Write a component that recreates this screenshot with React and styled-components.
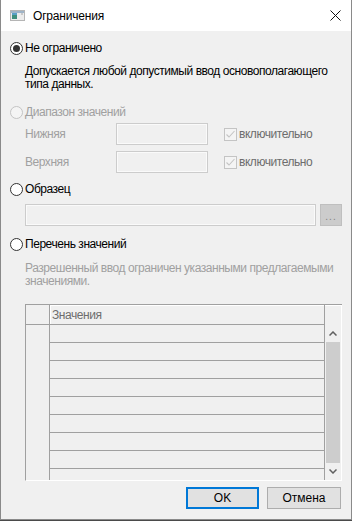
import React from 'react';
import styled, { createGlobalStyle } from 'styled-components';

const GlobalStyle = createGlobalStyle`
  html, body {
    margin: 0;
    padding: 0;
    background: #4a4a4a;
  }
  * {
    box-sizing: border-box;
  }
`;

const Window = styled.div`
  width: 352px;
  height: 520px;
  border: 1px solid #8a8a8a;
  border-top: none;
  background: #f0f0f0;
  font-family: "Liberation Sans", "Noto Sans", sans-serif;
  font-size: 12px;
  letter-spacing: -0.45px;
  color: #000;
  display: flex;
  flex-direction: column;
  overflow: hidden;
`;

const TitleBar = styled.div`
  height: 31px;
  background: #fff;
  display: flex;
  align-items: center;
  padding: 0 10px 0 9px;
  flex-shrink: 0;
`;

const TitleText = styled.span`
  margin-left: 8px;
  flex: 1;
  font-size: 12px;
  line-height: 14px;
  letter-spacing: -0.2px;
`;

const Body = styled.div`
  flex: 1;
  padding: 10px 9px 0 9px;
  display: flex;
  flex-direction: column;
`;

const RadioRow = styled.label`
  display: flex;
  align-items: center;
  height: 14px;
  margin-top: ${p => p.$top || 0}px;
  color: ${p => (p.$disabled ? '#a0a0a0' : '#000')};
  white-space: nowrap;
`;

const RadioCircle = styled.span`
  width: 13px;
  height: 13px;
  border-radius: 50%;
  border: 1px solid ${p => (p.$disabled ? '#c4c4c4' : '#333')};
  background: ${p => (p.$disabled ? '#f4f4f4' : '#fff')};
  display: flex;
  align-items: center;
  justify-content: center;
  margin-right: 2px;
  flex-shrink: 0;

  &::after {
    content: '';
    width: 7px;
    height: 7px;
    border-radius: 50%;
    background: #333;
    display: ${p => (p.$checked ? 'block' : 'none')};
  }
`;

const Desc = styled.div`
  margin: ${p => p.$top || 0}px 0 0 15px;
  color: ${p => (p.$muted ? '#a0a0a0' : '#000')};
  display: flex;
  flex-direction: column;
`;

const DescLine = styled.span`
  height: 13px;
  line-height: 13px;
  white-space: nowrap;
`;

const RangeRow = styled.div`
  display: flex;
  align-items: center;
  margin: ${p => p.$top || 0}px 0 0 15px;
  height: 22px;
`;

const RangeLabel = styled.span`
  width: 91px;
  color: #a0a0a0;
`;

const Field = styled.div`
  width: ${p => p.$w}px;
  height: 22px;
  border: 1px solid #cccccc;
  box-shadow: inset 0 0 0 1px #fafafa;
  background: #f0f0f0;
  flex-shrink: 0;
`;

const CheckBox = styled.span`
  width: 13px;
  height: 13px;
  border: 1px solid #c4c4c4;
  background: #f4f4f4;
  margin: 0 2px 0 16px;
  display: flex;
  align-items: center;
  justify-content: center;
`;

const CheckLabel = styled.span`
  color: #6d6d6d;
`;

const PatternRow = styled.div`
  display: flex;
  align-items: center;
  gap: 4px;
  margin: 8px 0 0 15px;
`;

const DotsButton = styled.div`
  width: 24px;
  height: 22px;
  background: #cccccc;
  border: 1px solid #bfbfbf;
  color: #838383;
  font-size: 10px;
  display: flex;
  align-items: flex-end;
  justify-content: center;
  padding-bottom: 3px;
  letter-spacing: 1px;
  line-height: 10px;
`;

const Table = styled.div`
  margin: 16px 0 0 15px;
  width: 317px;
  height: 177px;
  display: flex;
  border-top: 1px solid #a0a0a0;
  border-left: 1px solid #a0a0a0;
  border-bottom: 1px solid #fff;
  overflow: hidden;
`;

const RowHeadCol = styled.div`
  width: 24px;
  border-right: 1px solid #a0a0a0;
  flex-shrink: 0;
`;

const HeadCell = styled.div`
  height: 20px;
  border-bottom: 1px solid #a0a0a0;
  ${p => p.$light && 'box-shadow: inset 1px 1px 0 #fff;'}
  color: #6d6d6d;
  padding: 3px 0 0 2px;
  line-height: 14px;
`;

const DataCol = styled.div`
  flex: 1;
  border-right: 1px solid #a0a0a0;
  overflow: hidden;
`;

const DataRow = styled.div`
  height: 18px;
  border-bottom: 1px solid #a0a0a0;
`;

const ScrollCol = styled.div`
  width: 17px;
  border-right: 1px solid #fff;
  display: flex;
  flex-direction: column;
  flex-shrink: 0;
`;

const ScrollHead = styled.div`
  height: 20px;
  box-shadow: inset 0 1px 0 #fff;
`;

const ScrollArrow = styled.div`
  height: 17px;
  display: flex;
  align-items: center;
  justify-content: center;
`;

const Thumb = styled.div`
  height: 121px;
  margin: 0 1px;
  background: #cdcdcd;
`;

const Footer = styled.div`
  display: flex;
  justify-content: flex-end;
  gap: 8px;
  margin-top: 6px;
  padding-right: 1px;
`;

const Button = styled.div`
  width: ${p => p.$w}px;
  height: 22px;
  background: #e1e1e1;
  border: ${p => (p.$primary ? '2px solid #0078d7' : '1px solid #adadad')};
  display: flex;
  align-items: center;
  justify-content: center;
  line-height: 14px;
  letter-spacing: 0;
`;

const Radio = ({ label, checked, disabled, top }) => (
  <RadioRow $disabled={disabled} $top={top}>
    <RadioCircle $checked={checked} $disabled={disabled} />
    {label}
  </RadioRow>
);

const Check = () => (
  <CheckBox>
    <svg width="11" height="11" viewBox="0 0 11 11">
      <path d="M1.5 5.5 L4 8 L9.5 2" fill="none" stroke="#c4c4c4" strokeWidth="1.1" />
    </svg>
  </CheckBox>
);

const AppIcon = () => (
  <svg width="15" height="11" viewBox="0 0 15 11">
    <rect x="0.5" y="0.5" width="14" height="10" fill="#ececec" stroke="#b5b5b5" />
    <rect x="1" y="1" width="13" height="2" fill="#9fb4c8" />
    <rect x="2" y="3" width="5" height="6" fill="#3f8f7d" />
    <rect x="2" y="3" width="5" height="2" fill="#5aa0c8" />
    <rect x="11" y="3" width="2" height="2" fill="#c8c8c8" />
  </svg>
);

const CloseIcon = () => (
  <svg width="11" height="11" viewBox="0 0 11 11">
    <path d="M0.5 0.5 L10.5 10.5 M10.5 0.5 L0.5 10.5" stroke="#111" strokeWidth="1" />
  </svg>
);

const Chevron = ({ down }) => (
  <svg width="8" height="5" viewBox="0 0 8 5" style={down ? { transform: 'rotate(180deg)' } : undefined}>
    <path d="M0.5 4.5 L4 1 L7.5 4.5" fill="none" stroke="#606060" strokeWidth="1.5" />
  </svg>
);

const rows = Array.from({ length: 9 });

const App = () => {
  return (
    <Window>
      <GlobalStyle />
      <TitleBar>
        <AppIcon />
        <TitleText>Ограничения</TitleText>
        <CloseIcon />
      </TitleBar>
      <Body>
        <Radio label="Не ограничено" checked />
        <Desc $top={10}>
          <DescLine>Допускается любой допустимый ввод основополагающего</DescLine>
          <DescLine>типа данных.</DescLine>
        </Desc>

        <Radio label="Диапазон значений" disabled top={14} />
        <RangeRow $top={4}>
          <RangeLabel>Нижняя</RangeLabel>
          <Field $w={92} />
          <Check />
          <CheckLabel>включительно</CheckLabel>
        </RangeRow>
        <RangeRow $top={6}>
          <RangeLabel>Верхняя</RangeLabel>
          <Field $w={92} />
          <Check />
          <CheckLabel>включительно</CheckLabel>
        </RangeRow>

        <Radio label="Образец" top={9} />
        <PatternRow>
          <Field $w={291} />
          <DotsButton>...</DotsButton>
        </PatternRow>

        <Radio label="Перечень значений" top={11} />
        <Desc $top={11} $muted>
          <DescLine>Разрешенный ввод ограничен указанными предлагаемыми</DescLine>
          <DescLine>значениями.</DescLine>
        </Desc>

        <Table>
          <RowHeadCol>
            <HeadCell />
          </RowHeadCol>
          <DataCol>
            <HeadCell $light>Значения</HeadCell>
            {rows.map((_, i) => (
              <DataRow key={i} />
            ))}
          </DataCol>
          <ScrollCol>
            <ScrollHead />
            <ScrollArrow>
              <Chevron />
            </ScrollArrow>
            <Thumb />
            <ScrollArrow>
              <Chevron down />
            </ScrollArrow>
          </ScrollCol>
        </Table>

        <Footer>
          <Button $primary $w={73}>OK</Button>
          <Button $w={74}>Отмена</Button>
        </Footer>
      </Body>
    </Window>
  );
};

export default App;
